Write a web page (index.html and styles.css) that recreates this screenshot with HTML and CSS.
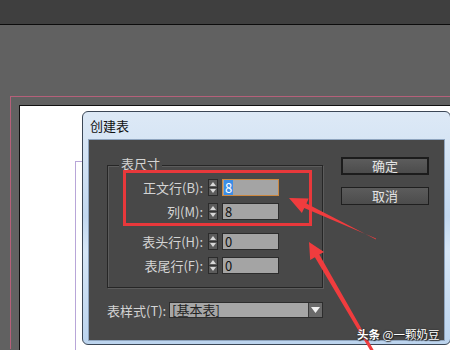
FILE: index.html
```html
<!DOCTYPE html>
<html lang="zh-CN">
<head>
    <meta charset="UTF-8">
    <title>创建表</title>
    <link rel="stylesheet" href="styles.css">
</head>
<body>

<div class="toolbar"></div>

<div class="bleed">
    <div class="page">
        <div class="text-frame"></div>

        <div class="dialog">
            <div class="titlebar">创建表</div>

            <div class="content">
                <div class="main">
                    <div class="group">
                        <span class="group-title">表尺寸</span>
                        <div class="rows">
                            <div class="row">
                                <label>正文行(B):</label>
                                <span class="spin">
                                    <svg width="10" height="17" viewBox="0 0 10 17">
                                        <path d="M5 3 L8 7 L2 7 Z M2 10 L8 10 L5 14 Z" fill="#d8d8d8"/>
                                        <path d="M1 8.5 H9" stroke="#333" stroke-width="1"/>
                                    </svg>
                                </span>
                                <span class="field focus"><span class="sel">8</span></span>
                            </div>
                            <div class="row">
                                <label>列(M):</label>
                                <span class="spin">
                                    <svg width="10" height="17" viewBox="0 0 10 17">
                                        <path d="M5 3 L8 7 L2 7 Z M2 10 L8 10 L5 14 Z" fill="#d8d8d8"/>
                                        <path d="M1 8.5 H9" stroke="#333" stroke-width="1"/>
                                    </svg>
                                </span>
                                <span class="field">8</span>
                            </div>
                            <div class="row gap-top">
                                <label>表头行(H):</label>
                                <span class="spin">
                                    <svg width="10" height="17" viewBox="0 0 10 17">
                                        <path d="M5 3 L8 7 L2 7 Z M2 10 L8 10 L5 14 Z" fill="#d8d8d8"/>
                                        <path d="M1 8.5 H9" stroke="#333" stroke-width="1"/>
                                    </svg>
                                </span>
                                <span class="field">0</span>
                            </div>
                            <div class="row">
                                <label>表尾行(F):</label>
                                <span class="spin">
                                    <svg width="10" height="17" viewBox="0 0 10 17">
                                        <path d="M5 3 L8 7 L2 7 Z M2 10 L8 10 L5 14 Z" fill="#d8d8d8"/>
                                        <path d="M1 8.5 H9" stroke="#333" stroke-width="1"/>
                                    </svg>
                                </span>
                                <span class="field">0</span>
                            </div>
                        </div>
                    </div>

                    <div class="style-row">
                        <label>表样式(T):</label>
                        <span class="select">
                            <span class="select-text">[基本表]</span>
                            <span class="select-arrow">
                                <svg width="9" height="6" viewBox="0 0 9 6"><path d="M0 0 H9 L4.5 6 Z" fill="#f2f2f2"/></svg>
                            </span>
                        </span>
                    </div>
                </div>

                <div class="buttons">
                    <button class="btn default">确定</button>
                    <button class="btn">取消</button>
                </div>
            </div>
        </div>
    </div>
</div>

<svg class="marks" width="450" height="350" viewBox="0 0 450 350">
    <rect x="124.5" y="171.5" width="186" height="53" fill="none" stroke="#e8383b" stroke-width="3"/>
    <polygon points="289,198 308.7,198.5 306.4,203.4 376,239.6 376,238.4 304.2,208 301.9,212.9" fill="#f03c3e"/>
    <polygon points="309,242 324,251.9 319.3,254.6 374.3,351.2 371.7,352.8 314.9,257.2 310.2,259.9" fill="#f03c3e"/>
</svg>

<div class="watermark"><b>头条</b> @一颗奶豆</div>

</body>
</html>
```

FILE: styles.css
```css
body {
    margin: 0;
    width: 450px;
    height: 350px;
    overflow: hidden;
    position: relative;
    background: #616161;
    font-family: "Noto Sans CJK SC", "Noto Sans", sans-serif;
    font-size: 13px;
}
.toolbar {
    height: 24px;
    background: #3f3f3f;
    border-bottom: 1px solid #0c0c0c;
}
.bleed {
    margin: 71px 0 0 10px;
    height: 244px;
    border-top: 1px solid #b5607a;
    border-left: 1px solid #b5607a;
    padding: 8px 0 0 8px;
}
.page {
    position: relative;
    height: 239px;
    background: #fff;
    border-top: 1px solid #111;
    border-left: 1px solid #111;
    padding: 5px 0 0 62px;
}
.text-frame {
    position: absolute;
    left: 55px;
    top: 55px;
    width: 30px;
    height: 188px;
    border-top: 1px solid #b8a6d8;
    border-left: 1px solid #b8a6d8;
}
.dialog {
    position: relative;
    z-index: 1;
    box-sizing: border-box;
    width: 369px;
    height: 234px;
    border: 1px solid #3b4756;
    border-radius: 6px;
    padding: 0 6px 4px 6px;
    background: linear-gradient(180deg, #dde9f6 0%, #d3e3f4 20%, #c3d8ef 45%, #d6e6f6 60%, #bcd4ee 100%);
}
.titlebar {
    height: 28px;
    line-height: 28px;
    padding-left: 1px;
    color: #111;
    font-size: 13px;
}
.content {
    display: flex;
    height: 200px;
    box-sizing: border-box;
    padding: 17px 0 0 18px;
    background: #484848;
    box-shadow: 0 0 0 1px #8fa5bf;
    color: #d4d4d4;
}
.main {
    width: 216px;
}
.group {
    box-sizing: border-box;
    height: 123px;
    margin-top: 8px;
    border: 1px solid #262626;
    box-shadow: 1px 1px 0 #5c5c5c, inset 1px 1px 0 #5c5c5c;
    padding-bottom: 14px;
}
.group-title {
    display: block;
    width: max-content;
    height: 14px;
    line-height: 14px;
    margin: -9px 0 0 11px;
    padding: 0 2px;
    background: #484848;
}
.rows {
    margin-top: 8px;
}
.row {
    display: flex;
    align-items: center;
    height: 17px;
    margin-bottom: 7px;
}
.row.gap-top {
    margin-top: 13px;
}
.row:last-child {
    margin-bottom: 0;
}
.row label {
    width: 95px;
    text-align: right;
    line-height: 17px;
}
.spin {
    display: block;
    width: 10px;
    height: 17px;
    margin: 0 4px 0 5px;
    background: #5b5b5b;
    box-shadow: 0 0 0 1px #2b2b2b inset;
}
.spin svg {
    display: block;
}
.field {
    box-sizing: border-box;
    width: 57px;
    height: 17px;
    line-height: 15px;
    padding-left: 2px;
    background: #a4a4a4;
    border: 1px solid #2c2c2c;
    color: #111;
}
.field.focus {
    border-color: #cc8840;
    padding-left: 1px;
}
.sel {
    display: inline-block;
    background: #3b8ee8;
    color: #fff;
    padding: 0 1px;
}
.style-row {
    display: flex;
    align-items: center;
    margin-top: 14px;
    height: 16px;
}
.style-row label {
    width: 62px;
}
.select {
    display: flex;
    box-sizing: border-box;
    width: 154px;
    height: 16px;
    background: #a6a6a6;
    border: 1px solid #2d2d2d;
    color: #222;
    line-height: 14px;
}
.select-text {
    flex: 1;
    padding-left: 2px;
}
.select-arrow {
    display: flex;
    align-items: center;
    justify-content: center;
    width: 13px;
    background: #6a6a6a;
    border-left: 1px solid #3a3a3a;
}
.buttons {
    display: flex;
    flex-direction: column;
    margin-left: 18px;
}
.btn {
    box-sizing: border-box;
    width: 88px;
    height: 18px;
    padding: 0;
    margin-bottom: 12px;
    border: 1px solid #1f1f1f;
    background: linear-gradient(180deg, #5c5c5c, #4c4c4c);
    color: #e4e4e4;
    font-family: inherit;
    font-size: 13px;
    line-height: 16px;
}
.btn.default {
    border: 2px solid #1c1c1c;
    line-height: 14px;
}
.marks {
    position: absolute;
    left: 0;
    top: 0;
    z-index: 2;
}
.watermark {
    position: absolute;
    z-index: 3;
    left: 357px;
    top: 325px;
    color: #fff;
    font-size: 11.5px;
    line-height: 18px;
    text-shadow: 0 0 2px #222, 1px 1px 1px #222;
}
```
